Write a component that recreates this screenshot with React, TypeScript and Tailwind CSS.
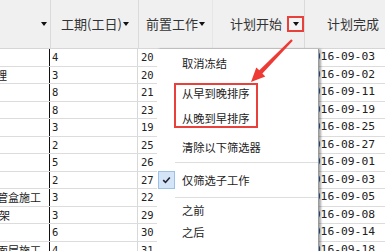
const rows = [
  { name: '', nameCls: '', days: '4', pre: '20', date: '2016-09-03' },
  { name: '处理', nameCls: 'ml-[-15px]', days: '3', pre: '20', date: '2016-09-02' },
  { name: '', nameCls: '', days: '8', pre: '21', date: '2016-09-11' },
  { name: '', nameCls: '', days: '8', pre: '23', date: '2016-09-19' },
  { name: '', nameCls: '', days: '3', pre: '19', date: '2016-08-25' },
  { name: '', nameCls: '', days: '2', pre: '25', date: '2016-08-27' },
  { name: '', nameCls: '', days: '5', pre: '26', date: '2016-09-01' },
  { name: '', nameCls: '', days: '2', pre: '27', date: '2016-09-03' },
  { name: '管盒施工', nameCls: 'ml-[-3px]', days: '3', pre: '22', date: '2016-09-05' },
  { name: '钢筋骨架', nameCls: 'ml-[-34px]', days: '3', pre: '29', date: '2016-09-08' },
  { name: '', nameCls: '', days: '6', pre: '30', date: '2016-09-14' },
  { name: '面层施工', nameCls: 'ml-[-3px]', days: '4', pre: '31', date: '2016-09-18' },
];

const cjk = 'font-["Noto_Sans_CJK_SC","Noto_Sans",sans-serif]';
const mono = 'font-["DejaVu_Sans_Mono","Liberation_Mono",monospace]';

function Caret() {
  return <span className="inline-block w-0 h-0 border-l-[3.5px] border-r-[3.5px] border-t-[4px] border-l-transparent border-r-transparent border-t-[#111]" />;
}

export default function App() {
  return (
    <div className={`relative w-[385px] h-[251px] overflow-hidden bg-white text-[#222] ${cjk}`}>
      {/* Header */}
      <div className="flex h-[49px] bg-[#f0f0f0] border-b border-[#d6d6d6] text-[13px] text-[#333]">
        <div className="w-[51px] shrink-0 border-r border-[#dadada] flex items-center justify-end pr-[3px]">
          <Caret />
        </div>
        <div className="w-[88px] shrink-0 border-r border-[#dadada] flex items-center pl-[10px] gap-[1px]">
          <span>工期(工日)</span>
          <Caret />
        </div>
        <div className="w-[74px] shrink-0 border-r border-[#e6e6e6] flex items-center pl-[7px] gap-[1px]">
          <span>前置工作</span>
          <Caret />
        </div>
        <div className="w-[92px] shrink-0 border-r border-[#dadada] flex items-center pl-[17px]">
          <span>计划开始</span>
          <span className="ml-[5px] w-[17px] h-[16px] border-2 border-[#e8413c] bg-[#f4f4f4] flex items-center justify-center">
            <Caret />
          </span>
        </div>
        <div className="flex-1 flex items-center pl-[22px]">
          <span>计划完成</span>
        </div>
      </div>

      {/* Body */}
      <div className="flex flex-col">
        {rows.map((r, i) => (
          <div key={i} className="flex h-[17.5px] border-b border-[#dcdcdc] leading-[16px]">
            <div className="w-[50px] shrink-0 overflow-hidden whitespace-nowrap text-[11px] border-r-[1.5px] border-[#111]">
              <div className={r.nameCls}>{r.name}</div>
            </div>
            <div className={`w-[88px] shrink-0 border-r border-[#d8d8d8] pl-[2px] text-[10.5px] ${mono}`}>{r.days}</div>
            <div className={`w-[74px] shrink-0 border-r border-[#d8d8d8] pl-[3px] text-[10.5px] ${mono}`}>{r.pre}</div>
            <div className="w-[92px] shrink-0 border-r border-[#d8d8d8]" />
            <div className={`flex-1 pl-[3px] text-[11.3px] ${mono}`}>{r.date}</div>
          </div>
        ))}
      </div>

      {/* Context menu */}
      <div className="absolute left-[157px] top-[49px] w-[162px] h-[210px] bg-white border-r border-[#9a9a9a] shadow-[2px_0_2px_rgba(0,0,0,0.35)] text-[11.25px] text-[#222]">
        <div className="flex flex-col">
          <div className="h-[28px] flex items-center pl-[25px]">取消冻结</div>
          <div className="h-[4px]" />
          <div className="h-[25px] flex items-center pl-[25px]">从早到晚排序</div>
          <div className="h-[25px] flex items-center pl-[25px]">从晚到早排序</div>
          <div className="h-[31px] flex items-center pl-[25px] pt-[2px]">清除以下筛选器</div>
          <div className="h-px ml-[18px] bg-[#dedede]" />
          <div className="h-[34px] flex items-center">
            <div className="w-[17px] h-[18px] ml-[1px] bg-[#d4e5f7] border border-[#9cc1e6] flex items-center justify-center">
              <svg width="9" height="8" viewBox="0 0 9 8">
                <path d="M1.2 4.2 L3.5 6.4 L7.8 1.4" fill="none" stroke="#223" strokeWidth="1.6" />
              </svg>
            </div>
            <span className="ml-[7px]">仅筛选子工作</span>
          </div>
          <div className="h-px ml-[18px] bg-[#dedede]" />
          <div className="h-[24px] flex items-center pl-[25px]">之前</div>
          <div className="h-[21px] flex items-center pl-[25px]">之后</div>
        </div>
      </div>

      {/* Annotation: red box around sort items */}
      <div className="absolute left-[174px] top-[83px] w-[84px] h-[45px] border-2 border-[#e8413c]" />

      {/* Annotation: red arrow */}
      <svg className="absolute inset-0 pointer-events-none" width="385" height="251" viewBox="0 0 385 251">
        <polygon
          points="291.2,39.3 292.8,40.7 262.4,73.6 265.3,76.4 251,82 256.3,67.5 259.3,70.3"
          fill="#ee3a35"
        />
      </svg>
    </div>
  );
}
